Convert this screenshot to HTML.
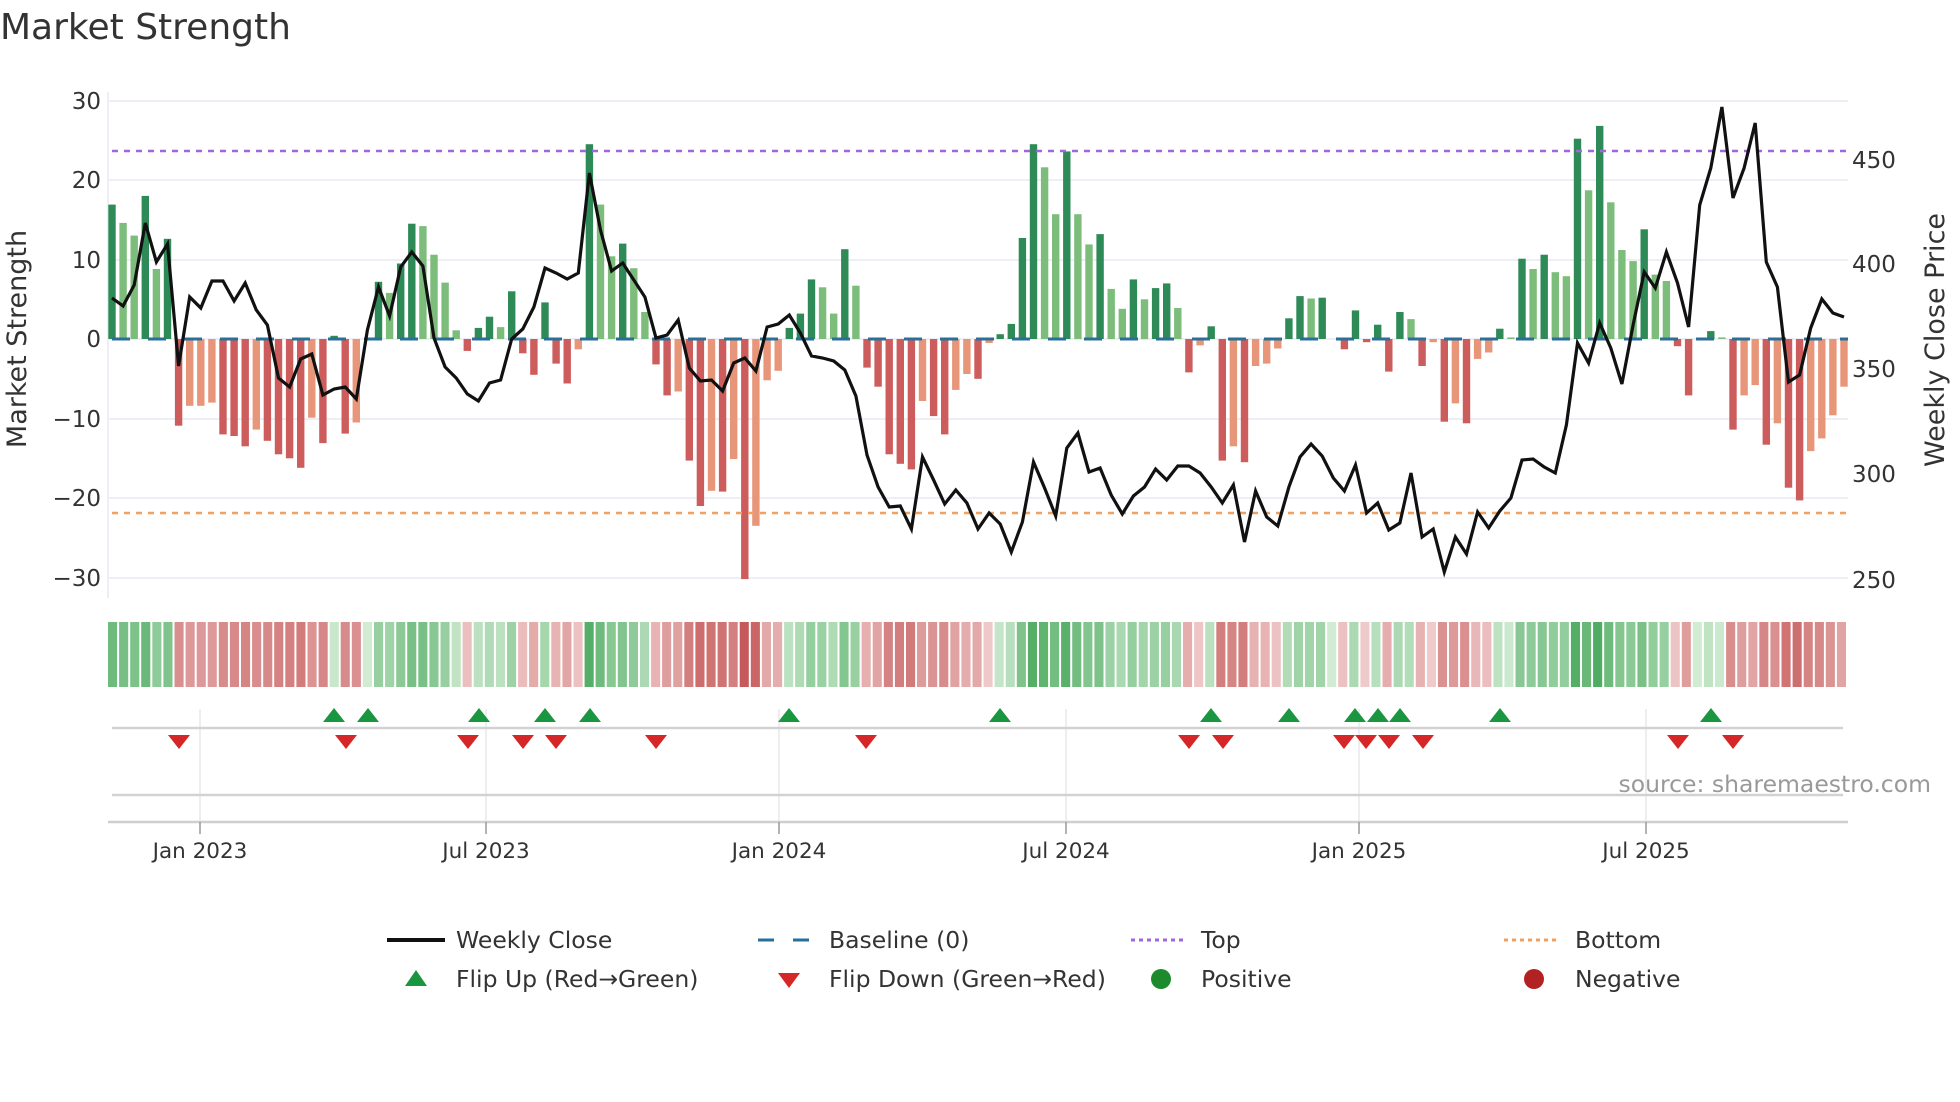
<!DOCTYPE html>
<html><head><meta charset="utf-8">
<style>
html,body{margin:0;padding:0;background:#fff;}
svg{display:block;font-family:"DejaVu Sans","Liberation Sans",sans-serif;}
</style></head>
<body>
<svg id="s" width="1960" height="1102" viewBox="0 0 1960 1102" xmlns="http://www.w3.org/2000/svg">
<rect width="1960" height="1102" fill="#fff"/>
<text x="0" y="39" font-size="36" fill="#333">Market Strength</text>
<g id="grid" stroke="#edeef6" stroke-width="2">
<line x1="108" y1="101" x2="1848" y2="101"/><line x1="108" y1="180" x2="1848" y2="180"/>
<line x1="108" y1="260" x2="1848" y2="260"/><line x1="108" y1="339" x2="1848" y2="339"/>
<line x1="108" y1="419" x2="1848" y2="419"/><line x1="108" y1="498" x2="1848" y2="498"/>
<line x1="108" y1="578" x2="1848" y2="578"/>
<line x1="108" y1="92" x2="108" y2="598"/>
</g>
<g font-size="23" fill="#333" text-anchor="end">
<text x="101" y="109">30</text><text x="101" y="188">20</text><text x="101" y="268">10</text>
<text x="101" y="347">0</text><text x="101" y="427">−10</text><text x="101" y="506">−20</text>
<text x="101" y="586">−30</text>
</g>
<g font-size="23" fill="#333">
<text x="1852" y="168">450</text><text x="1852" y="272">400</text><text x="1852" y="377">350</text>
<text x="1852" y="482">300</text><text x="1852" y="588">250</text>
</g>
<text transform="translate(26,339) rotate(-90)" text-anchor="middle" font-size="27" fill="#333">Market Strength</text>
<text transform="translate(1944,340) rotate(-90)" text-anchor="middle" font-size="27" fill="#333">Weekly Close Price</text>
<g id="bars"></g>
<line x1="112" y1="339" x2="1848" y2="339" stroke="#2a6f97" stroke-width="3" stroke-dasharray="18 18"/>
<line x1="112" y1="151" x2="1848" y2="151" stroke="#a066dc" stroke-width="2.5" stroke-dasharray="6 6"/>
<line x1="112" y1="513" x2="1848" y2="513" stroke="#f0a060" stroke-width="2.5" stroke-dasharray="6 6"/>
<polyline id="line" fill="none" stroke="#111" stroke-width="3.2" stroke-linejoin="miter"/>
<g id="heat"></g>
<g stroke="#e6e8ee" stroke-width="1.5">
<line x1="200" y1="709" x2="200" y2="822"/><line x1="486" y1="709" x2="486" y2="822"/>
<line x1="779" y1="709" x2="779" y2="822"/><line x1="1066" y1="709" x2="1066" y2="822"/>
<line x1="1359" y1="709" x2="1359" y2="822"/><line x1="1646" y1="709" x2="1646" y2="822"/>
</g>
<line x1="112" y1="728" x2="1843" y2="728" stroke="#d2d2d2" stroke-width="2.5"/>
<line x1="112" y1="795" x2="1843" y2="795" stroke="#d2d2d2" stroke-width="2.5"/>
<line x1="108" y1="822" x2="1848" y2="822" stroke="#cfcfcf" stroke-width="2.5"/>
<g stroke="#999" stroke-width="1.5">
<line x1="200" y1="822" x2="200" y2="834"/><line x1="486" y1="822" x2="486" y2="834"/>
<line x1="779" y1="822" x2="779" y2="834"/><line x1="1066" y1="822" x2="1066" y2="834"/>
<line x1="1359" y1="822" x2="1359" y2="834"/><line x1="1646" y1="822" x2="1646" y2="834"/>
</g>
<g id="marks"></g>
<text x="1931" y="792" text-anchor="end" font-size="23.5" fill="#999">source: sharemaestro.com</text>
<g font-size="21.5" fill="#333" text-anchor="middle">
<text x="200" y="858">Jan 2023</text><text x="486" y="858">Jul 2023</text><text x="779" y="858">Jan 2024</text>
<text x="1066" y="858">Jul 2024</text><text x="1359" y="858">Jan 2025</text><text x="1646" y="858">Jul 2025</text>
</g>
<g font-size="23.5" fill="#333">
<line x1="387" y1="940" x2="445" y2="940" stroke="#111" stroke-width="4"/>
<text x="456" y="948">Weekly Close</text>
<line x1="758" y1="940" x2="813" y2="940" stroke="#2a6f97" stroke-width="3" stroke-dasharray="16 19"/>
<text x="829" y="948">Baseline (0)</text>
<line x1="1131" y1="940" x2="1185" y2="940" stroke="#a066dc" stroke-width="3" stroke-dasharray="4 4"/>
<text x="1201" y="948">Top</text>
<line x1="1504" y1="940" x2="1559" y2="940" stroke="#f0a060" stroke-width="3" stroke-dasharray="4 4"/>
<text x="1575" y="948">Bottom</text>
<polygon points="405,986 416,970 427,986" fill="#1a9641"/>
<text x="456" y="987">Flip Up (Red→Green)</text>
<polygon points="778,973 800,973 789,988" fill="#d62728"/>
<text x="829" y="987">Flip Down (Green→Red)</text>
<circle cx="1161" cy="979" r="10" fill="#1e8a2e"/>
<text x="1201" y="987">Positive</text>
<circle cx="1534" cy="979" r="10" fill="#b22222"/>
<text x="1575" y="987">Negative</text>
</g>
</svg>
<script>
(function(){
var NS="http://www.w3.org/2000/svg";
var v=[16.9,14.6,13,18,8.8,12.6,-10.9,-8.4,-8.4,-8,-12,-12.2,-13.5,-11.4,-12.8,-14.5,-15,-16.2,-9.9,-13.1,0.4,-11.9,-10.5,0,7.2,5.8,9.5,14.5,14.2,10.6,7.1,1.1,-1.5,1.4,2.8,1.5,6,-1.8,-4.5,4.6,
-3.1,-5.6,-1.3,24.5,16.9,10.4,12,8.9,3.4,-3.2,-7.1,-6.6,-15.3,-21,-19.1,-19.2,-15.1,-30.2,-23.5,-5.2,-4,1.4,3.2,7.5,6.5,3.2,11.3,6.7,-3.6,-6,-14.5,-15.7,-16.4,-7.8,-9.7,-12,-6.4,-4.4,-5,
-0.5,0.6,1.9,12.7,24.5,21.6,15.7,23.6,15.7,11.9,13.2,6.3,3.8,7.5,5,6.4,7,3.9,-4.2,-0.8,1.6,-15.3,-13.5,-15.5,-3.4,-3.1,-1.2,2.6,5.4,5.1,5.2,0,-1.3,3.6,-0.4,1.8,-4.1,3.4,2.5,-3.4,
-0.4,-10.4,-8.1,-10.6,-2.5,-1.7,1.3,0.2,10.1,8.8,10.6,8.4,7.9,25.2,18.7,26.8,17.2,11.2,9.8,13.8,8.1,7.3,-0.9,-7.1,0,1,0.2,-11.4,-7.1,-5.8,-13.3,-10.6,-18.7,-20.3,-14.1,-12.5,-9.6,-6];
var t="dlldld"+"dllldddlddddldddl"+"l"+"dlddlllldddldddd"+
"ddldlldllddlddldldllldddlldldddddlddlld"+
"l"+"dddd"+"ll"+"d"+"ll"+"d"+"ll"+"d"+"l"+"dd"+"l"+"d"+"l"+"dd"+"l"+"d"+"lll"+"dd"+"l"+"dddddddd"+"l"+"d"+
"ldldlldldldlldldllldlldddd"+"ldlldlddllll";
var ly=[298,306,285,223,262,244,366,297,308,281,281,301,283,310,325,378,387,359,354,395,389,387,399,330,287,316,267,252,266,338,367,378,394,401,383,380,339,329,307,268,
273,279,273,173,230,271,263,280,297,338,335,320,368,381,380,391,363,358,371,327,324,315,333,356,358,361,370,396,455,487,507,506,529,457,480,504,490,503,529,
513,524,552,522,462,488,516,448,433,472,468,495,514,496,487,469,480,466,466,473,487,503,485,542,491,517,526,487,457,444,456,478,491,465,513,503,530,523,473,
537,529,572,537,554,512,528,511,498,460,459,467,473,425,343,363,323,348,384,325,272,288,252,283,327,205,168,107,198,168,123,262,287,382,375,328,299,313,317];
var n=v.length, x0=112, p=(1844-112)/(n-1), k=7.95, bw=7.4;
var bars=document.getElementById("bars"), heat=document.getElementById("heat");
var pts=[];
function mix(a,b,s){return "rgb("+[0,1,2].map(function(i){return Math.round(a[i]+(b[i]-a[i])*s)}).join(",")+")";}
for(var i=0;i<n;i++){
  var cx=x0+i*p, val=v[i], d=(t.charAt(i)||"d")==="d";
  if(val!==0){
    var r=document.createElementNS(NS,"rect");
    var h=Math.abs(val)*k, y=val>0?339-h:339;
    r.setAttribute("x",(cx-bw/2).toFixed(1));r.setAttribute("y",y.toFixed(1));
    r.setAttribute("width",bw);r.setAttribute("height",h.toFixed(1));
    r.setAttribute("fill",val>0?(d?"#2e8b57":"#7dbd7b"):(d?"#cd5c5c":"#e8967a"));
    bars.appendChild(r);
  }
  if(i<ly.length) pts.push(cx.toFixed(1)+","+ly[i]);
  var hx=108+i*(1740/n);
  var s=Math.min(Math.abs(val)/28,1); s=Math.pow(s,0.6);
  var c= val>=0 ? mix([210,236,212],[76,170,95],s) : mix([243,212,212],[198,90,90],s);
  var hr=document.createElementNS(NS,"rect");
  hr.setAttribute("x",hx.toFixed(1));hr.setAttribute("y",622);
  hr.setAttribute("width",(1740/n-2).toFixed(1));hr.setAttribute("height",65);
  hr.setAttribute("fill",c);heat.appendChild(hr);
}
document.getElementById("line").setAttribute("points",pts.join(" "));
var marks=document.getElementById("marks");
[334,368,479,545,590,789,1000,1211,1289,1355,1378,1400,1500,1711].forEach(function(x){
  var g=document.createElementNS(NS,"polygon");
  g.setAttribute("points",(x-11)+",722 "+x+",708 "+(x+11)+",722");g.setAttribute("fill","#1a9641");marks.appendChild(g);
});
[179,346,468,523,556,656,866,1189,1223,1344,1366,1389,1423,1678,1733].forEach(function(x){
  var g=document.createElementNS(NS,"polygon");
  g.setAttribute("points",(x-11)+",735 "+(x+11)+",735 "+x+",749");g.setAttribute("fill","#d62728");marks.appendChild(g);
});
})();
</script>
</body></html>
